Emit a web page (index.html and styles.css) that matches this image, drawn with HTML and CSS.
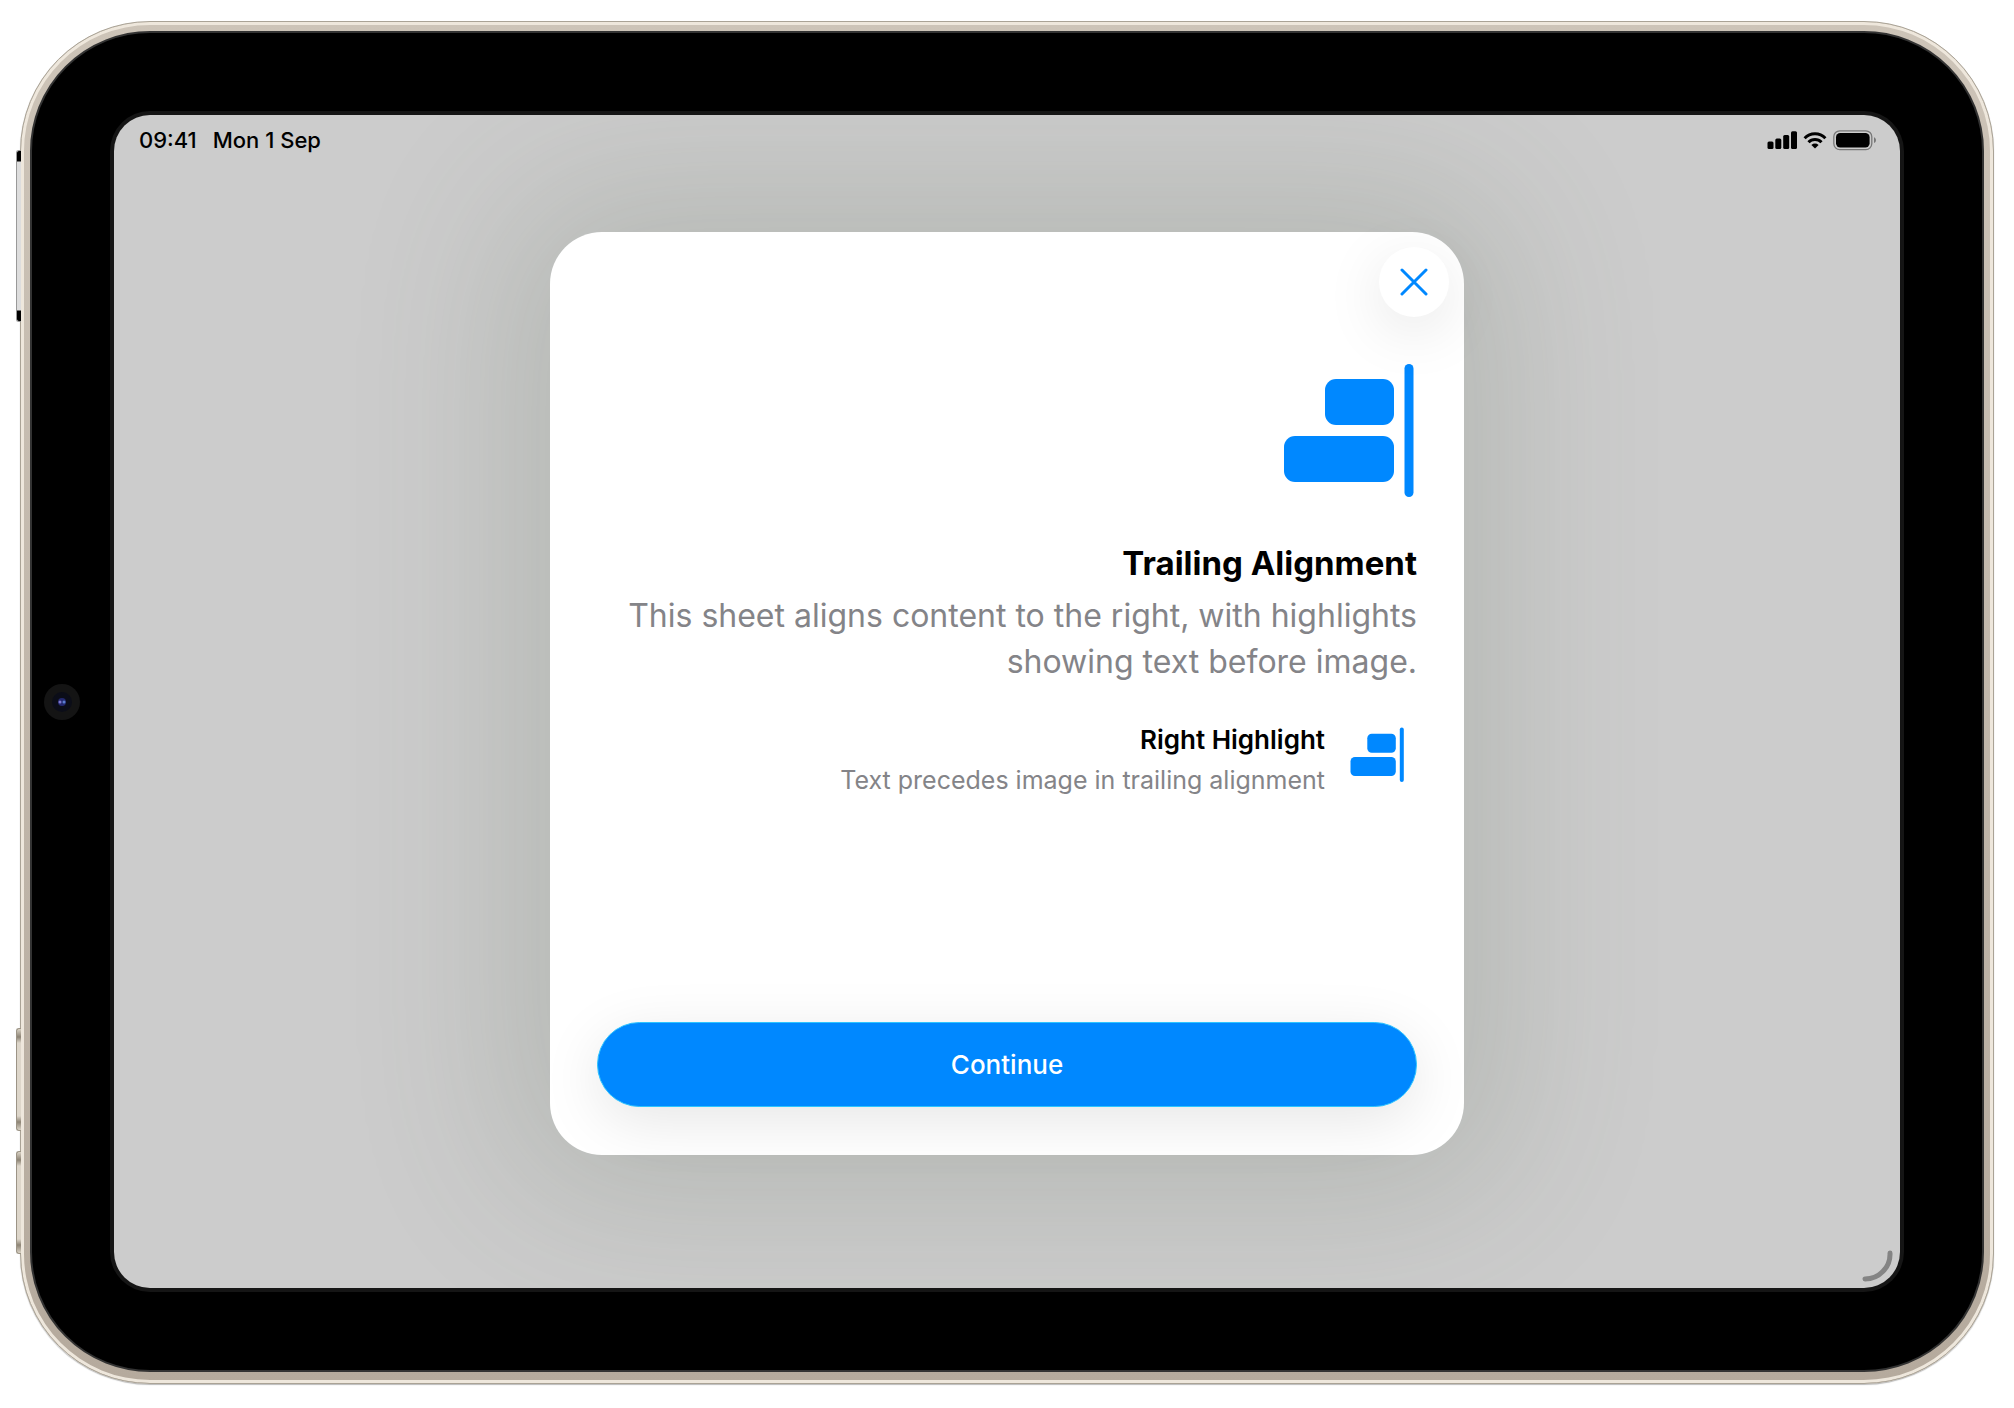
FILE: index.html
```html
<!DOCTYPE html>
<html lang="en-GB">
<head>
<meta charset="utf-8">
<meta name="viewport" content="width=device-width, initial-scale=1">
<title>Trailing Alignment</title>
<link rel="stylesheet" href="styles.css">
</head>
<body>
<div class="device">
  <span class="key key-power"></span>
  <span class="key key-up"></span>
  <span class="key key-down"></span>
  <div class="bezel">
    <svg class="camera" viewBox="0 0 36 36" aria-hidden="true">
      <circle cx="18" cy="18" r="18" fill="#141414"/>
      <circle cx="18" cy="18" r="10" fill="#0b0d18"/>
      <circle cx="18" cy="18" r="4" fill="#23286e"/>
      <circle cx="16" cy="18" r="1.500" fill="#7f78cf"/>
      <circle cx="20" cy="18" r="1.500" fill="#5b7fd0"/>
    </svg>
    <div class="screen">
      <header class="status">
        <div class="clock"><time>09:41</time><span>Mon 1 Sep</span></div>
        <svg class="indicators" viewBox="0 0 112 22" role="img" aria-label="Signal, Wi-Fi and battery">
          <rect x="1.500" y="12.500" width="6" height="7.500" rx="1.500"/>
          <rect x="9.300" y="9.500" width="6" height="10.500" rx="1.500"/>
          <rect x="17.200" y="6" width="6" height="14" rx="1.500"/>
          <rect x="25" y="2.300" width="6" height="17.700" rx="1.500"/>
          <g fill="none" stroke="#000" stroke-width="3">
            <path d="M38.600 9.200a14.500 14.500 0 0 1 20.800 0"/>
            <path d="M42.500 13.200a9 9 0 0 1 13 0"/>
          </g>
          <path d="M45.400 16a5.200 5.200 0 0 1 7.200 0L49 19.600z"/>
          <rect x="67.800" y="1.800" width="38" height="18.800" rx="6" fill="none" stroke="#777" stroke-width="1.300"/>
          <rect x="70" y="4" width="33.600" height="14.400" rx="4.200"/>
          <path d="M108 8.300c2.600.8 2.600 5 0 5.800z" fill="#777"/>
        </svg>
      </header>
      <main class="stage">
        <section class="sheet" role="dialog" aria-labelledby="sheet-title">
          <button class="close" type="button" aria-label="Close">
            <svg viewBox="0 0 28 28" aria-hidden="true"><path d="M2 2l24 24M26 2L2 26"/></svg>
          </button>
          <svg class="hero" viewBox="0 0 133 134" aria-hidden="true">
            <rect x="41" y="15" width="69" height="46" rx="11"/>
            <rect x="0" y="72" width="110" height="46" rx="11"/>
            <rect x="120.500" y="0" width="9" height="133" rx="4.500"/>
          </svg>
          <h1 id="sheet-title">Trailing Alignment</h1>
          <p class="lead">This sheet aligns content to the right, with highlights showing text before image.</p>
          <div class="highlight">
            <div>
              <h2>Right Highlight</h2>
              <p>Text precedes image in trailing alignment</p>
            </div>
            <svg viewBox="0 0 80 68" aria-hidden="true">
              <rect x="30.300" y="13.700" width="28.500" height="19" rx="4.500"/>
              <rect x="13.500" y="37" width="45.300" height="19" rx="4.500"/>
              <rect x="62.800" y="7.500" width="4" height="54.500" rx="2"/>
            </svg>
          </div>
          <button class="continue" type="button">Continue</button>
        </section>
      </main>
      <svg class="corner" viewBox="0 0 32 32" aria-hidden="true"><path d="M3 29A25 25 0 0 0 28 3"/></svg>
    </div>
  </div>
</div>
</body>
</html>
```
FILE: styles.css
```css
* { box-sizing: border-box; margin: 0; }

body {
  display: flex;
  min-height: 100vh;
  padding: 21px 20px 24px;
  background: #fff;
  font-family: Inter, "Liberation Sans", sans-serif;
  color: #000;
}

button { font: inherit; }

/* Device shell */
.device {
  position: relative;
  flex: 1;
  display: flex;
  padding: 9px 9px 11px;
  border: 1px solid #aaa396;
  border-radius: 130px;
  background: linear-gradient(#cdc4b8, #b5aa9d);
  box-shadow: inset 0 0 0 3px #eee7dc, 0 1px 1px #bbb;
}

.key {
  position: absolute;
  left: -5px;
  width: 5px;
  height: 103px;
  border: 1px solid #9c9486;
  border-right: 0;
  border-radius: 3px 0 0 3px;
  background: linear-gradient(#d9d2c5, #8d8475 8px, #ddd6ca 14px, #ddd6ca calc(100% - 14px), #8d8475 calc(100% - 8px), #d9d2c5);
}
.key-power {
  top: 128px;
  height: 172px;
  border-color: #999;
  background: linear-gradient(#000 10px, #ddd 11px, #ddd calc(100% - 11px), #000 calc(100% - 10px));
}
.key-up { bottom: 252px; }
.key-down { bottom: 129px; }

.bezel {
  position: relative;
  flex: 1;
  display: flex;
  padding: 82px;
  border: 2px solid #333;
  border-radius: 120px;
  background: #000;
}

.camera {
  position: absolute;
  left: 12px;
  top: calc(50% - 18px);
  width: 36px;
  height: 36px;
}

.screen {
  position: relative;
  flex: 1;
  display: flex;
  flex-direction: column;
  border-radius: 36px;
  background: #ccc;
  box-shadow: 0 0 0 4px #151515;
  overflow: hidden;
}

.status {
  position: relative;
  z-index: 1;
  display: flex;
  align-items: center;
  justify-content: space-between;
  height: 50px;
  padding: 0 22px 0 25px;
  font-size: 22px;
  font-weight: 500;
}
.clock { display: flex; gap: 16px; }
.indicators { width: 112px; height: 22px; }

.stage {
  flex: 1;
  display: grid;
  place-items: center;
  padding-bottom: 66px;
}

/* Sheet */
.sheet {
  position: relative;
  display: flex;
  flex-direction: column;
  align-items: flex-end;
  width: min(914px, 100%);
  min-height: 923px;
  padding: 132px 47px 48px;
  border-radius: 52px;
  background: #fff;
  box-shadow: 0 0 160px 40px rgba(80, 96, 72, 0.18);
  text-align: right;
}

.close {
  position: absolute;
  top: 15px;
  right: 15px;
  display: grid;
  place-items: center;
  width: 70px;
  height: 70px;
  padding: 0;
  border: 0;
  border-radius: 50%;
  background: #fff;
  box-shadow: 0 14px 60px rgba(0, 0, 0, 0.1);
}
.close svg {
  width: 28px;
  height: 28px;
  fill: none;
  stroke: #08f;
  stroke-width: 3;
  stroke-linecap: round;
}

.hero {
  width: 133px;
  height: 134px;
  margin-bottom: 43px;
  fill: #08f;
}

h1 {
  font-size: 33px;
  font-weight: 700;
  line-height: 44px;
}

.lead {
  margin-top: 8px;
  font-size: 32px;
  line-height: 46px;
  color: #848488;
}

.highlight {
  display: flex;
  gap: 12px;
  margin-top: 35px;
  font-size: 26px;
  line-height: 40px;
}
.highlight h2 {
  font-size: inherit;
  font-weight: 600;
}
.highlight p {
  font-size: 25px;
  color: #848488;
}
.highlight svg {
  flex: none;
  width: 80px;
  height: 68px;
  fill: #08f;
}

.continue {
  width: 100%;
  height: 85px;
  margin-top: auto;
  border: 1px solid #2cc4ff;
  border-radius: 43px;
  background: #08f;
  box-shadow: 0 14px 60px rgba(0, 0, 0, 0.1);
  color: #fff;
  font-size: 26px;
  font-weight: 500;
}

.corner {
  position: absolute;
  right: 6px;
  bottom: 6px;
  width: 32px;
  height: 32px;
  fill: none;
  stroke: #848484;
  stroke-width: 5;
  stroke-linecap: round;
}
```
